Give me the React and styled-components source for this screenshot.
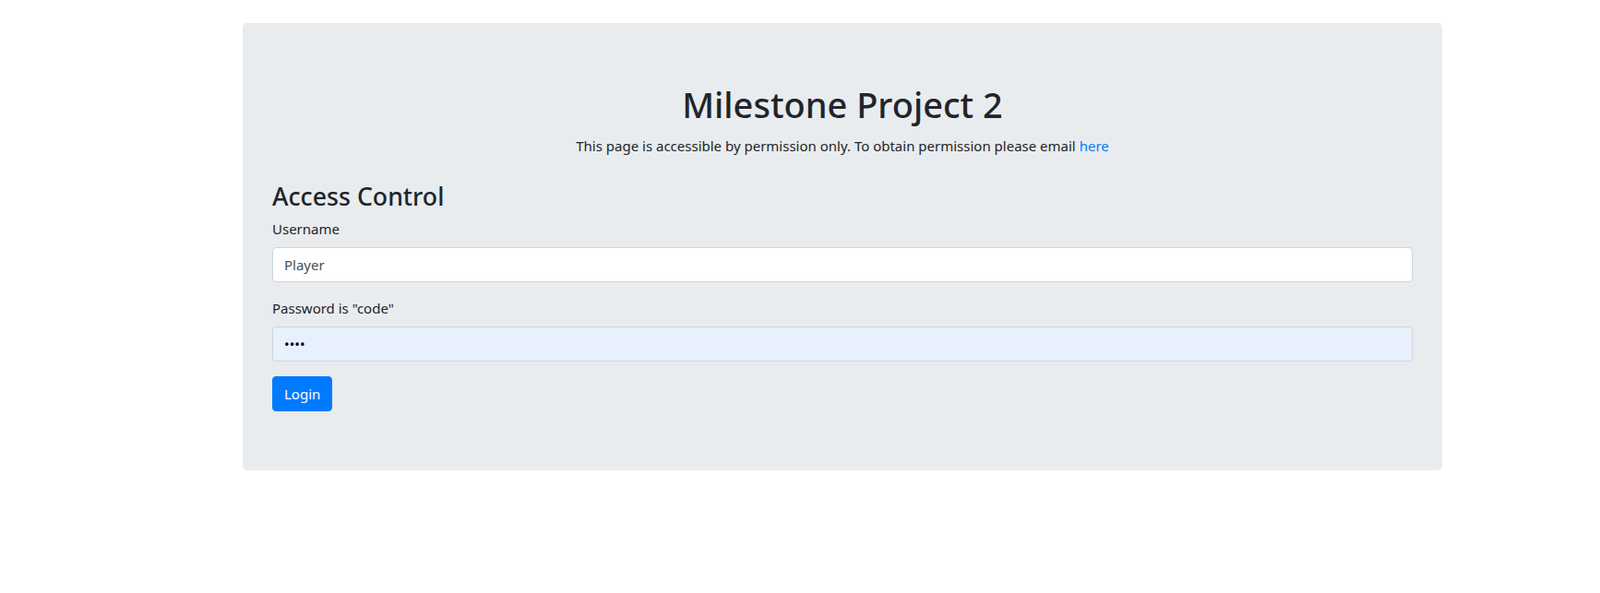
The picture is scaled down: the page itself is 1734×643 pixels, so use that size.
import styled, { createGlobalStyle } from 'styled-components';

const GlobalStyle = createGlobalStyle`
  html, body {
    margin: 0;
    background: #fff;
    font-family: "Noto Sans", "Open Sans", sans-serif;
    color: #212529;
    font-size: 15px;
    line-height: 24px;
  }
  * { box-sizing: border-box; }
`;

const Page = styled.div`
  padding: 25px 171px 0 263px;
`;

const Jumbotron = styled.div`
  background: #e9ecef;
  border-radius: 4.8px;
  padding: 64px 32px;
`;

const Title = styled.h1`
  margin: 0 0 9px;
  font-size: 38px;
  font-weight: 500;
  line-height: 48px;
  text-align: center;
`;

const Intro = styled.p`
  margin: 0 0 26px;
  text-align: center;
`;

const Link = styled.a`
  color: #007bff;
  text-decoration: none;
`;

const SectionTitle = styled.h3`
  margin: 0 0 6px;
  font-size: 26.7px;
  font-weight: 500;
  line-height: 33.6px;
`;

const Form = styled.form`
  margin: 0;
`;

const Group = styled.div`
  margin-bottom: 16px;
`;

const Label = styled.label`
  display: block;
  margin-bottom: 8px;
`;

const Input = styled.input`
  display: block;
  width: 100%;
  height: 38px;
  padding: 6px 12px;
  font: inherit;
  color: ${(p) => (p.$autofill ? '#000' : '#495057')};
  background: ${(p) => (p.$autofill ? '#e8f0fe' : '#fff')};
  border: 1px solid #ced4da;
  border-radius: 4px;
  outline: none;
`;

const Button = styled.button`
  display: inline-block;
  font: inherit;
  color: #fff;
  background: #007bff;
  border: 1px solid #007bff;
  border-radius: 4px;
  padding: 6px 12px;
  line-height: 24px;
  cursor: pointer;
`;

export default function App() {
  return (
    <>
      <GlobalStyle />
      <Page>
        <Jumbotron>
          <Title>Milestone Project 2</Title>
          <Intro>
            This page is accessible by permission only. To obtain permission please email{' '}
            <Link href="#">here</Link>
          </Intro>
          <SectionTitle>Access Control</SectionTitle>
          <Form onSubmit={(e) => e.preventDefault()}>
            <Group>
              <Label htmlFor="username">Username</Label>
              <Input id="username" type="text" defaultValue="Player" />
            </Group>
            <Group>
              <Label htmlFor="password">Password is "code"</Label>
              <Input id="password" type="password" defaultValue="code" $autofill />
            </Group>
            <Button type="submit">Login</Button>
          </Form>
        </Jumbotron>
      </Page>
    </>
  );
}
